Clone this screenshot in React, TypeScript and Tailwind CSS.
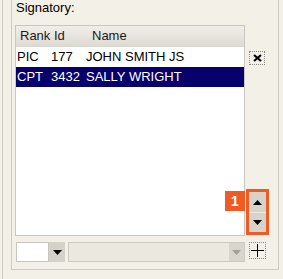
import type { ReactNode } from "react";

const ROWS = [
  { rank: "PIC", id: "177", name: "JOHN SMITH JS", selected: false },
  { rank: "CPT", id: "3432", name: "SALLY WRIGHT", selected: true },
];

function DottedButton({ className, children }: { className: string; children: ReactNode }) {
  return (
    <div
      className={`flex items-center justify-center border border-dotted border-[#8a8780] bg-[#f3f0e7] ${className}`}
    >
      {children}
    </div>
  );
}

function Arrow({ up = false, color = "#000" }: { up?: boolean; color?: string }) {
  return (
    <svg width="9" height="5" viewBox="0 0 9 5">
      <path d={up ? "M4.5 0 L9 5 L0 5 Z" : "M0 0 L9 0 L4.5 5 Z"} fill={color} />
    </svg>
  );
}

export default function App() {
  return (
    <div className="flex h-[279px] w-[283px] bg-[#f3f0e7] font-['Liberation_Sans',Arial,sans-serif] text-[13px] text-black">
      <div className="ml-[2px] flex h-full border-l border-[#cfcbc2] pl-[8px]">
        <div className="flex h-[270px] w-[268px] flex-col border-x border-b border-[#cfcbc2]">
          <div className="ml-[4px] h-[15px] leading-[15px]">Signatory:</div>

          <div className="mt-[10px] ml-[3px] flex">
            {/* list */}
            <div className="h-[211px] w-[230px] border border-[#c9c6bf] bg-white">
              <div className="flex h-[21px] border-b border-[#d9d6cf] bg-gradient-to-b from-[#f0eee9] to-[#dedbd4] leading-[20px] text-[#1a1a1a]">
                <div className="w-[34px] shrink-0 pl-[4px]">Rank</div>
                <div className="w-[35px] shrink-0 pl-[4px]">Id</div>
                <div className="flex-1 pl-[7px]">Name</div>
              </div>
              {ROWS.map((r) => (
                <div
                  key={r.id}
                  className={`flex h-[20px] leading-[20px] ${
                    r.selected ? "bg-[#08006b] text-white" : "text-black"
                  }`}
                >
                  <div className="w-[34px] shrink-0 pl-[1px]">{r.rank}</div>
                  <div className="w-[35px] shrink-0 pl-[1px]">{r.id}</div>
                  <div className="flex-1 pl-[1px]">{r.name}</div>
                </div>
              ))}
            </div>

            {/* side buttons */}
            <div className="ml-[4px] flex w-[17px] flex-col">
              <DottedButton className="mt-[26px] h-[14px] w-[16px]">
                <svg width="9" height="8" viewBox="0 0 9 8">
                  <path d="M1 1 L8 7 M8 1 L1 7" stroke="#000" strokeWidth="2.2" />
                </svg>
              </DottedButton>

              <div className="relative mt-[127px] flex h-[40px] w-[17px] flex-col gap-[1px] bg-[#ebe8e0] outline outline-[3px] outline-[#f15a22]">
                <div className="absolute left-[-24px] top-[-1px] flex h-[20px] w-[20px] items-center justify-center bg-[#f15a22] text-[14px] font-bold text-white">
                  1
                </div>
                <div className="flex h-[20px] items-center justify-center bg-[#d6d3cb]">
                  <Arrow up />
                </div>
                <div className="flex h-[19px] items-center justify-center bg-[#d6d3cb]">
                  <Arrow />
                </div>
              </div>
            </div>
          </div>

          {/* bottom row */}
          <div className="mt-[6px] ml-[4px] flex items-start">
            <div className="flex h-[20px] w-[49px]">
              <div className="w-[33px] border border-[#c9c6bf] bg-white" />
              <div className="flex w-[16px] items-center justify-center bg-[#d4d1c9]">
                <Arrow />
              </div>
            </div>
            <div className="ml-[3px] flex h-[20px] w-[177px] border border-[#cdcac2] bg-[#ebe8df]">
              <div className="flex-1" />
              <div className="flex w-[15px] items-center justify-center bg-[#d8d5cd]">
                <Arrow color="#a3a19c" />
              </div>
            </div>
            <DottedButton className="ml-[4px] h-[17px] w-[17px]">
              <svg width="15" height="15" viewBox="0 0 15 15">
                <path d="M1 7.5 H14 M7.5 1 V14" stroke="#000" strokeWidth="1" />
              </svg>
            </DottedButton>
          </div>
        </div>
      </div>
    </div>
  );
}
